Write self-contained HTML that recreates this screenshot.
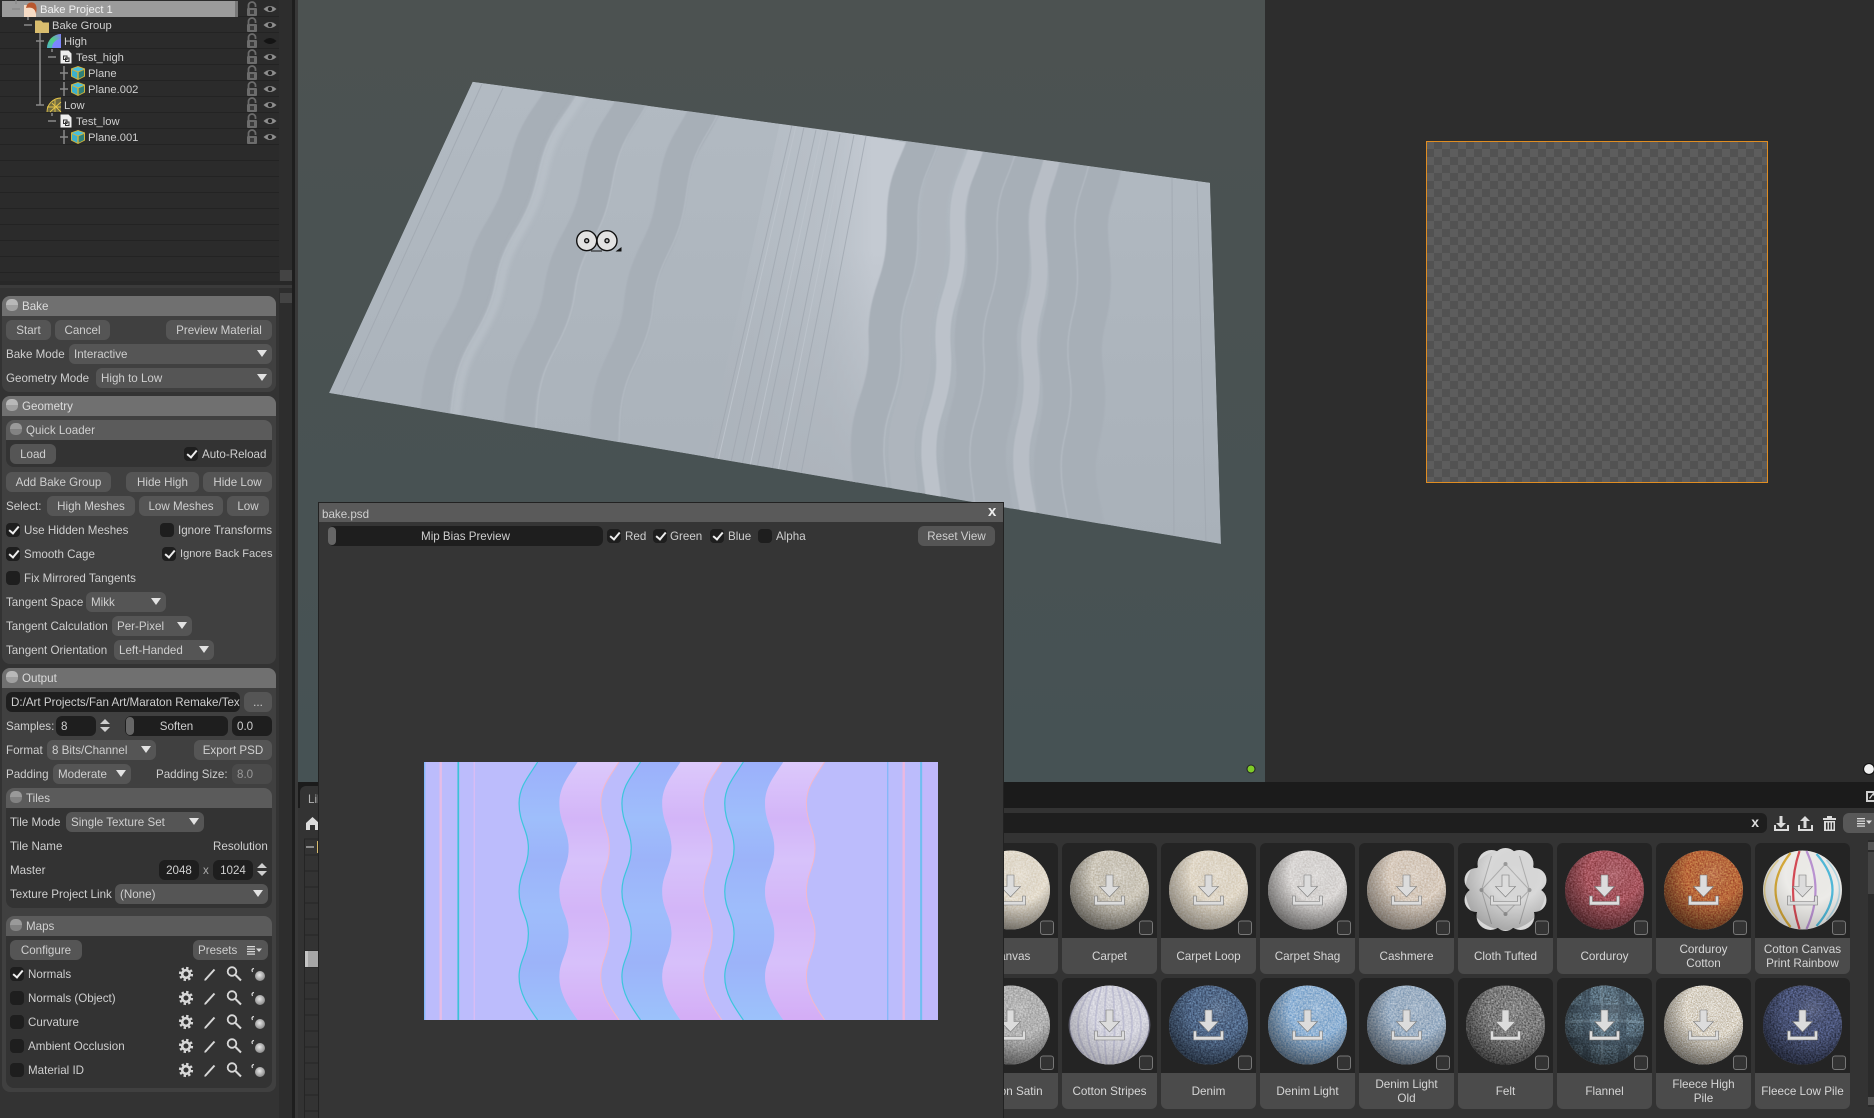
<!DOCTYPE html>
<html lang="en"><head><meta charset="utf-8"><title>Bake</title>
<style>
html,body{margin:0;padding:0;background:#333}
#p{position:relative;width:1874px;height:1118px;overflow:hidden;background:#333;font:11.6px/21px "Liberation Sans",sans-serif;color:#cfcfcf}
#p div{position:absolute;white-space:nowrap;box-sizing:border-box}
#p svg{position:absolute;overflow:hidden}
.t{height:20px}
.b,.d,.i{height:20px;border-radius:6px;background:#555;text-align:center;color:#cfcfcf}
.d{text-align:left;padding-left:5px}
.d:after{content:"";position:absolute;right:5px;top:6px;border-top:7px solid #e2e2e2;border-left:5px solid transparent;border-right:5px solid transparent}
.i{background:#1e1e1e;text-align:left;padding-left:5px}
.c{width:14px;height:14px;border-radius:4px;background:#1e1e1e}
.k:after{content:"";position:absolute;left:2.5px;top:2.5px;width:8px;height:4px;border-left:2px solid #eee;border-bottom:2px solid #eee;transform:rotate(-50deg)}
.h{background:#707070;height:20px;border-radius:8px 8px 0 0;color:#dcdcdc;padding-left:20px;line-height:22px}
.s{background:#5b5b5b;height:20px;border-radius:8px 8px 0 0;padding-left:20px;color:#d0d0d0;line-height:22px}
.n{left:6px;top:3px;width:12px;height:12px;border-radius:5px;background:linear-gradient(#b8b8b8 50%,#a0a0a0 50%)}
.s .n{background:linear-gradient(#9a9a9a 50%,#828282 50%);left:4px}
.m{background:#404040;border-radius:8px}
.q{background:#333;border-radius:8px}
.r{height:16px;line-height:18px;color:#cfcfcf;font-size:11.2px}
.a{width:95px;height:95px;background:#242424;border-radius:6px 6px 0 0}
.l{width:95px;height:36px;background:#4b4b4b;border-radius:0 0 6px 6px;text-align:center;line-height:14px;color:#d6d6d6;display:flex;align-items:center;justify-content:center;white-space:normal!important;padding:2px 3px 0;font-size:11.7px}
</style></head><body><div id="p">

<!-- viewport -->
<div style="left:298px;top:0;width:967px;height:782px;background:linear-gradient(#4c5251,#465254)"></div>
<svg style="left:0;top:0" width="1874" height="782" viewBox="0 0 1874 782">
<defs>
<clipPath id="quad"><path d="M472.6 81.7L1210 182.7 1221 544 329 393Z"/></clipPath>
<linearGradient id="pl" x1="0" y1="0" x2="0" y2="1"><stop offset="0" stop-color="#b2bac2"/><stop offset="1" stop-color="#a9b1b9"/></linearGradient>
<linearGradient id="lt" x1="0" y1="0" x2="1" y2="0"><stop offset="0" stop-color="#c4cad2" stop-opacity="0"/><stop offset=".6" stop-color="#c4cad2" stop-opacity=".45"/><stop offset=".8" stop-color="#c4cad2"/><stop offset="1" stop-color="#c4cad2"/></linearGradient>
<linearGradient id="fd" x1="0" y1="0" x2="0" y2="1"><stop offset=".35" stop-color="#acb3bb" stop-opacity="0"/><stop offset="1" stop-color="#acb3bb" stop-opacity=".9"/></linearGradient>
<filter id="bs" x="-5%" y="-5%" width="110%" height="110%"><feGaussianBlur stdDeviation=".5"/></filter>
<filter id="bh" x="-20%" y="-5%" width="140%" height="110%"><feGaussianBlur stdDeviation="2"/></filter>
<path id="wv" d="M60-80L0 0C-40 60-100 90-100 150C-100 220-40 260-40 335C-40 410-100 430-100 500C-100 570-40 590-40 665C-40 740-100 770-100 830C-100 900-40 950 0 1000L60 1080" fill="none" vector-effect="non-scaling-stroke"/>
</defs>
<g clip-path="url(#quad)">
<path d="M472.6 81.7L1210 182.7 1221 544 329 393Z" fill="url(#pl)"/>
<path d="M780 122L915 144 856 486 706 458Z" fill="url(#lt)"/>
<path d="M780 122L915 144 856 486 706 458Z" fill="url(#fd)"/>
<g fill="none" filter="url(#bs)">
<g stroke="#a7afb7">
<g transform="matrix(.1 0 -.125 .316 560 94.7)"><use href="#wv" stroke-width="30"/></g>
<g transform="matrix(.1 0 -.112 .321 631 103.7)"><use href="#wv" stroke-width="30"/></g>
<g transform="matrix(.1 0 -.098 .325 703 113.7)"><use href="#wv" stroke-width="30"/></g>
<g transform="matrix(.1 0 -.053 .34 922.5 144)"><use href="#wv" stroke-width="32"/></g>
<g transform="matrix(.1 0 -.033 .342 1012.8 157.7)"><use href="#wv" stroke-width="62"/></g>
<g transform="matrix(.1 0 -.0177 .353 1089.7 168.3)"><use href="#wv" stroke-width="62"/></g>
</g>
<g transform="matrix(.1 0 -.047 .339 951.8 149.3)" stroke="#aeb5bd"><use href="#wv" stroke-width="26"/></g>
<g stroke="#bcc2ca">
<g transform="matrix(.1 0 -.042 .339 974.7 152.7)"><use href="#wv" stroke-width="15"/></g>
<g transform="matrix(.1 0 -.0235 .3456 1051 162.7)" stroke="#b8bec6"><use href="#wv" stroke-width="16"/></g>
</g>
<g stroke="#bec5cd" stroke-width="1" opacity=".7">
<g transform="matrix(.1 0 -.125 .316 576 97)"><use href="#wv" stroke-width="1"/></g>
<g transform="matrix(.1 0 -.098 .325 717 116)"><use href="#wv" stroke-width="1"/></g>
<g transform="matrix(.1 0 -.11 .32 646 106)"><use href="#wv" stroke-width="1"/></g>
<g transform="matrix(.1 0 -.04 .34 1014 158)"><use href="#wv" stroke-width="1"/></g>
<g transform="matrix(.1 0 -.02 .35 1088 168)"><use href="#wv" stroke-width="1"/></g>
<g transform="matrix(.1 0 -.05 .34 937 147)"><use href="#wv" stroke-width="1"/></g>
</g>
</g>
<g fill="none" filter="url(#bh)" stroke="#c0c7cf" opacity=".5">
<g transform="matrix(.1 0 -.124 .316 580 98)"><use href="#wv" stroke-width="9"/></g>
</g>
<g fill="none" stroke="#a0a8b0" stroke-width="1">
<path d="M792 125L714 460M804 127L731 462M816 130L742 465M828 132L757 468M840 134L772 470M854 135L786 472M866 136L801 474" opacity=".8"/>
<path d="M503 88L356 400M482 84L340 398M1172 178L1174 537M1197 182L1206 542" opacity=".8"/>
<path d="M796 126L718 461M822 131L750 466M846 134L778 471" stroke="#bcc3cb"/>
</g>
</g>
<!-- eyes cursor -->
<g fill="#e2e2e2" stroke="#111" stroke-width="1.4">
<circle cx="586.7" cy="240.7" r="10"/><circle cx="607" cy="240.7" r="10"/>
<circle cx="586.7" cy="240.7" r="2" fill="#bbb"/><circle cx="607" cy="240.7" r="2" fill="#bbb"/>
</g>
<path d="M591 251H602M617 251H621V248Z" stroke="#111" stroke-width="1" fill="#111"/>
<circle cx="1251" cy="769" r="4" fill="#7ecb28" stroke="#222" stroke-width="1"/>
</svg>

<!-- right 2D panel -->
<div style="left:1265px;top:0;width:609px;height:782px;background:#2d2d2d"></div>
<div style="left:1426px;top:141px;width:342px;height:342px;border:1px solid #e08d22;background-color:#5d5d5d;background-image:linear-gradient(45deg,#525252 25%,transparent 25%,transparent 75%,#525252 75%),linear-gradient(45deg,#525252 25%,transparent 25%,transparent 75%,#525252 75%);background-size:16px 16px;background-position:7px 7px,15px 15px"></div>
<div style="left:1864px;top:764px;width:10px;height:10px;border-radius:5px;background:#f0f0f0;outline:1px solid #111"></div>

<!-- library bars -->
<div style="left:298px;top:782px;width:1576px;height:26px;background:#1b1b1b"></div>
<div style="left:300px;top:786px;width:30px;height:24px;background:#333;border-radius:6px 0 0 0;padding:3px 0 0 8px;color:#b5b5b5">Lil</div>
<div style="left:298px;top:808px;width:1576px;height:310px;background:#333"></div>
<div style="left:1000px;top:813px;width:767px;height:20px;background:#1e1e1e;border-radius:0 6px 6px 0;text-align:right;padding-right:8px;color:#ddd;line-height:19px;font-size:14px;font-weight:bold">x</div>
<div style="left:1843px;top:813px;width:31px;height:20px;background:#585858;border-radius:6px 0 0 6px"></div>
<svg style="left:298px;top:782px" width="1576" height="336" viewBox="298 782 1576 336">
<g fill="#dcdcdc">
<path d="M312.5 817L319 823V830H315V825H310V830H306V823Z"/>
<path d="M306 846H314V848H306Z" fill="#8a8a8a"/>
<path d="M1779.5 816h3v7h3.5l-5 5-5-5h3.5zM1774 825h2v4h11v-4h2v6h-15zM1805 816l5 5h-3.5v7h-3v-7H1800zM1798 825h2v4h11v-4h2v6h-15z"/>
<path d="M1823 818h13v2h-13zM1827 816h5v2h-5zM1824 821h11v10h-11zM1826 822.500v7h1.500v-7zM1829 822.500v7h1.500v-7zM1832 822.500v7h1.500v-7z" fill-rule="evenodd"/>
<path d="M1857 818h8v1.300h-8zM1857 820.500h8v1.300h-8zM1857 823h8v1.300h-8zM1857 825.500h8v1.300h-8zM1866 820.500h6l-3 3.500z"/>
<path d="M1866 791h8v2h-6v7h6v2h-8zM1869 798l4-5-2-1h3v4l-1-1-3 4z" fill="#cfcfcf"/>
</g>
<path d="M304 839H318M304 855H318M304 871H318M304 887H318M304 903H318M304 919H318M304 935H318M304 951H318M304 967H318M304 983H318M304 999H318M304 1015H318M304 1031H318M304 1047H318M304 1063H318M304 1079H318M304 1095H318M304 1111H318M304.500 839V1118" stroke="#252525"/>
<rect x="305" y="951" width="13" height="16" fill="#a6a6a6"/><rect x="305" y="951" width="3" height="16" fill="#c4c4c4"/>
<rect x="317" y="841" width="1" height="12" fill="#d8bb6c"/>
<rect x="1868" y="840" width="6" height="267" fill="#2b2b2b"/><rect x="1868" y="852" width="6" height="42" fill="#444"/><rect x="1868" y="842" width="6" height="8" fill="#555"/><rect x="1868" y="1097" width="6" height="8" fill="#555"/>
</svg>

<!-- cards row 1 -->
<div class="a" style="left:963px;top:843px"></div><div class="l" style="left:963px;top:938px">Canvas</div>
<div class="a" style="left:1062px;top:843px"></div><div class="l" style="left:1062px;top:938px">Carpet</div>
<div class="a" style="left:1161px;top:843px"></div><div class="l" style="left:1161px;top:938px">Carpet Loop</div>
<div class="a" style="left:1260px;top:843px"></div><div class="l" style="left:1260px;top:938px">Carpet Shag</div>
<div class="a" style="left:1359px;top:843px"></div><div class="l" style="left:1359px;top:938px">Cashmere</div>
<div class="a" style="left:1458px;top:843px"></div><div class="l" style="left:1458px;top:938px">Cloth Tufted</div>
<div class="a" style="left:1557px;top:843px"></div><div class="l" style="left:1557px;top:938px">Corduroy</div>
<div class="a" style="left:1656px;top:843px"></div><div class="l" style="left:1656px;top:938px">Corduroy<br>Cotton</div>
<div class="a" style="left:1755px;top:843px"></div><div class="l" style="left:1755px;top:938px">Cotton Canvas<br>Print Rainbow</div>
<!-- cards row 2 -->
<div class="a" style="left:963px;top:978px"></div><div class="l" style="left:963px;top:1073px">Cotton Satin</div>
<div class="a" style="left:1062px;top:978px"></div><div class="l" style="left:1062px;top:1073px">Cotton Stripes</div>
<div class="a" style="left:1161px;top:978px"></div><div class="l" style="left:1161px;top:1073px">Denim</div>
<div class="a" style="left:1260px;top:978px"></div><div class="l" style="left:1260px;top:1073px">Denim Light</div>
<div class="a" style="left:1359px;top:978px"></div><div class="l" style="left:1359px;top:1073px">Denim Light<br>Old</div>
<div class="a" style="left:1458px;top:978px"></div><div class="l" style="left:1458px;top:1073px">Felt</div>
<div class="a" style="left:1557px;top:978px"></div><div class="l" style="left:1557px;top:1073px">Flannel</div>
<div class="a" style="left:1656px;top:978px"></div><div class="l" style="left:1656px;top:1073px">Fleece High<br>Pile</div>
<div class="a" style="left:1755px;top:978px"></div><div class="l" style="left:1755px;top:1073px">Fleece Low Pile</div>

<svg style="left:960px;top:840px" width="914" height="278" viewBox="960 840 914 278">
<defs>
<radialGradient id="sh" cx=".62" cy=".3" r=".85"><stop offset="0" stop-color="#fff" stop-opacity=".12"/><stop offset=".4" stop-color="#000" stop-opacity="0"/><stop offset="1" stop-color="#000" stop-opacity=".68"/></radialGradient>
<filter id="nz" x="0" y="0" width="100%" height="100%" color-interpolation-filters="sRGB"><feTurbulence type="fractalNoise" baseFrequency=".6" numOctaves="2" seed="3"/><feColorMatrix values=".7 0 0 0 .15 .7 0 0 0 .15 .7 0 0 0 .15 0 0 0 0 1"/><feComposite in2="SourceGraphic" operator="in"/><feBlend in2="SourceGraphic" mode="overlay"/></filter>
<filter id="nz2" x="0" y="0" width="100%" height="100%" color-interpolation-filters="sRGB"><feTurbulence type="fractalNoise" baseFrequency=".8" numOctaves="2" seed="7"/><feColorMatrix values="1.7 0 0 0 -.35 1.7 0 0 0 -.35 1.7 0 0 0 -.35 0 0 0 0 1"/><feComposite in2="SourceGraphic" operator="in"/><feBlend in2="SourceGraphic" mode="overlay"/></filter>
<g id="sp"><circle r="39.500" fill="url(#sh)"/></g>
<g id="dl"><path d="M-3.500-15H3.500V-3.500H10L0 7-10-3.500H-3.500Z" fill="#dcdcdc" stroke="#777" stroke-width=".6"/><path d="M-15 6h3v5.500h24V6h3v9h-30Z" fill="#dcdcdc" stroke="#777" stroke-width=".6"/></g>
<rect id="cb" x="30" y="31" width="13" height="13.500" rx="2.500" fill="#333" stroke="#777"/>
<clipPath id="c1"><circle r="39.500"/></clipPath>
</defs>
<g filter="url(#nz)">
<circle cx="1010.500" cy="890" r="39.500" fill="#e6decf"/><circle cx="1109.500" cy="890" r="39.500" fill="#cfc9bc"/><circle cx="1208.500" cy="890" r="39.500" fill="#e2d9c9"/><circle cx="1307.500" cy="890" r="39.500" fill="#dbd8d6"/><circle cx="1406.500" cy="890" r="39.500" fill="#dacdbf"/>
<circle cx="1604.500" cy="890" r="39.500" fill="#a8565f"/><circle cx="1703.500" cy="890" r="39.500" fill="#bb6a3c"/>
<circle cx="1010.500" cy="1025" r="39.500" fill="#b5b5b5"/><circle cx="1109.500" cy="1025" r="39.500" fill="#d6d6e0"/><circle cx="1208.500" cy="1025" r="39.500" fill="#51698a"/><circle cx="1307.500" cy="1025" r="39.500" fill="#94b6d8"/><circle cx="1406.500" cy="1025" r="39.500" fill="#9fb3c8"/><circle cx="1505.500" cy="1025" r="39.500" fill="#7d7d7d"/><circle cx="1604.500" cy="1025" r="39.500" fill="#596f7e"/><circle cx="1802.500" cy="1025" r="39.500" fill="#4a5478"/>
</g>
<g filter="url(#nz2)"><circle cx="1703.500" cy="1025" r="39.500" fill="#dcd5c8"/></g>
<!-- tufted -->
<g transform="translate(1505.500 890)" fill="#d8d8d8"><circle r="36"/><circle cx="-14" cy="-26" r="14"/><circle cx="14" cy="-26" r="14"/><circle cx="0" cy="-29" r="13"/><circle cx="-29" cy="-10" r="12"/><circle cx="29" cy="-10" r="12"/><circle cx="-29" cy="10" r="12"/><circle cx="29" cy="10" r="12"/><circle cx="-15" cy="26" r="14"/><circle cx="15" cy="26" r="14"/><circle cx="0" cy="30" r="11"/>
<path d="M0-26L-24 0 0 24 24 0ZM-14-34L-24 0-14 34M14-34L24 0 14 34" fill="none" stroke="#8a8a8a" stroke-width="1" opacity=".55"/>
<circle cx="0" cy="-26" r="2" fill="#999"/><circle cx="-24" cy="0" r="2" fill="#999"/><circle cx="24" cy="0" r="2" fill="#999"/><circle cx="0" cy="24" r="2" fill="#999"/>
<circle r="40" fill="url(#sh)" opacity=".45"/></g>
<!-- rainbow -->
<g transform="translate(1802.500 890)"><circle r="39.500" fill="#ecebe8"/><g fill="none" stroke-width="2.200"><path d="M-12-37Q-42 0-12 37" stroke="#d8ab3a"/><path d="M-3-39Q-16 0-3 39" stroke="#d44a55"/><path d="M4-39Q22 0 4 39" stroke="#b890d0"/><path d="M14-36Q46 0 14 36" stroke="#50b8d8"/><path d="M-24-30Q-52 0-24 30" stroke="#e8c860" stroke-width="1.500" opacity=".6"/><path d="M24-30Q50 0 24 30" stroke="#88c8e0" stroke-width="1.500" opacity=".6"/></g></g>
<!-- cotton stripes -->
<g transform="translate(1109.500 1025)" fill="none" stroke="#a2a2c4" stroke-width="1.800" opacity=".42"><path d="M-3-39Q-7 0-3 39M3-39Q7 0 3 39M-8-38Q-20 0-8 38M8-38Q20 0 8 38M-13-37Q-32 0-13 37M13-37Q32 0 13 37M-19-34Q-44 0-19 34M19-34Q44 0 19 34M-26-29Q-54 0-26 29M26-29Q54 0 26 29"/></g>
<!-- flannel -->
<g transform="translate(1604.500 1025)" clip-path="url(#c1)"><path d="M-40-20H40V-12H-40ZM-40 12H40V20H-40ZM-22-40H-14V40H-22ZM14-40H22V40H14Z" fill="#2f3c48" opacity=".4"/><path d="M-40-4Q0-8 40-4V-1Q0-5-40-1ZM-4-40V40H-1V-40Z" fill="#b8d0e0" opacity=".2"/></g>
<g>
<use href="#sp" x="1010.500" y="890"/><use href="#sp" x="1109.500" y="890"/><use href="#sp" x="1208.500" y="890" opacity=".75"/><use href="#sp" x="1307.500" y="890"/><use href="#sp" x="1406.500" y="890" opacity=".85"/><use href="#sp" x="1604.500" y="890"/><use href="#sp" x="1703.500" y="890"/><use href="#sp" x="1802.500" y="890" opacity=".35"/>
<use href="#sp" x="1010.500" y="1025"/><use href="#sp" x="1109.500" y="1025" opacity=".4"/><use href="#sp" x="1208.500" y="1025"/><use href="#sp" x="1307.500" y="1025"/><use href="#sp" x="1406.500" y="1025"/><use href="#sp" x="1505.500" y="1025"/><use href="#sp" x="1604.500" y="1025"/><use href="#sp" x="1703.500" y="1025"/><use href="#sp" x="1802.500" y="1025"/>
</g>
<g>
<use href="#dl" x="1010.500" y="890"/><use href="#dl" x="1109.500" y="890"/><use href="#dl" x="1208.500" y="890"/><use href="#dl" x="1307.500" y="890"/><use href="#dl" x="1406.500" y="890"/><use href="#dl" x="1505.500" y="890"/><use href="#dl" x="1604.500" y="890"/><use href="#dl" x="1703.500" y="890"/><use href="#dl" x="1802.500" y="890"/>
<use href="#dl" x="1010.500" y="1025"/><use href="#dl" x="1109.500" y="1025"/><use href="#dl" x="1208.500" y="1025"/><use href="#dl" x="1307.500" y="1025"/><use href="#dl" x="1406.500" y="1025"/><use href="#dl" x="1505.500" y="1025"/><use href="#dl" x="1604.500" y="1025"/><use href="#dl" x="1703.500" y="1025"/><use href="#dl" x="1802.500" y="1025"/>
<use href="#cb" x="1010.500" y="890"/><use href="#cb" x="1109.500" y="890"/><use href="#cb" x="1208.500" y="890"/><use href="#cb" x="1307.500" y="890"/><use href="#cb" x="1406.500" y="890"/><use href="#cb" x="1505.500" y="890"/><use href="#cb" x="1604.500" y="890"/><use href="#cb" x="1703.500" y="890"/><use href="#cb" x="1802.500" y="890"/>
<use href="#cb" x="1010.500" y="1025"/><use href="#cb" x="1109.500" y="1025"/><use href="#cb" x="1208.500" y="1025"/><use href="#cb" x="1307.500" y="1025"/><use href="#cb" x="1406.500" y="1025"/><use href="#cb" x="1505.500" y="1025"/><use href="#cb" x="1604.500" y="1025"/><use href="#cb" x="1703.500" y="1025"/><use href="#cb" x="1802.500" y="1025"/>
</g>
</svg>

<!-- bake window -->
<div style="left:318px;top:502px;width:686px;height:616px;background:#353535;border:1px solid #222;border-bottom:0"></div>
<div style="left:319px;top:503px;width:684px;height:19px;background:#5a5a5a"></div>
<div class="t" style="left:322px;top:504px;color:#d0d0d0">bake.psd</div>
<div class="t" style="left:988px;top:501px;font-size:15px;font-weight:bold;color:#eee">x</div>
<div class="i" style="left:328px;top:526px;width:275px;text-align:center;padding:0">Mip Bias Preview</div>
<div style="left:328px;top:527px;width:8px;height:18px;border-radius:4px;background:#666"></div>
<div class="c k" style="left:607px;top:529px"></div><div class="t" style="left:625px;top:526px">Red</div>
<div class="c k" style="left:653px;top:529px"></div><div class="t" style="left:670px;top:526px">Green</div>
<div class="c k" style="left:710px;top:529px"></div><div class="t" style="left:728px;top:526px">Blue</div>
<div class="c" style="left:758px;top:529px"></div><div class="t" style="left:776px;top:526px">Alpha</div>
<div class="b" style="left:918px;top:526px;width:77px">Reset View</div>
<svg style="left:424px;top:762px" width="514" height="258" viewBox="12 36 1492 774" preserveAspectRatio="none">
<defs>
<linearGradient id="bl" x1="0" y1="0" x2="0" y2="1"><stop offset="0" stop-color="#9cb0fb"/><stop offset=".22" stop-color="#9ebefb"/><stop offset=".38" stop-color="#9cb3f9"/><stop offset=".58" stop-color="#9ebdfb"/><stop offset=".78" stop-color="#9cb3f9"/><stop offset="1" stop-color="#9cc2fb"/></linearGradient>
<linearGradient id="pk" x1="0" y1="0" x2="0" y2="1"><stop offset="0" stop-color="#dcc9fb"/><stop offset=".22" stop-color="#d3b5f8"/><stop offset=".38" stop-color="#d7c2fa"/><stop offset=".58" stop-color="#d3b5f8"/><stop offset=".78" stop-color="#d7c0fa"/><stop offset="1" stop-color="#d4adf6"/></linearGradient>
<g id="wb">
<path d="M342 36C315 80 288 110 288 160C288 220 315 240 315 295C315 350 288 370 288 425C288 480 315 500 315 550C315 610 288 630 288 680C288 730 315 770 342 810H458C431 770 405 730 405 680C405 630 432 610 432 550C432 500 405 480 405 425C405 370 432 350 432 295C432 240 405 220 405 160C405 110 431 80 458 36Z" fill="url(#bl)"/>
<path d="M458 36C431 80 405 110 405 160C405 220 432 240 432 295C432 350 405 370 405 425C405 480 432 500 432 550C432 610 405 630 405 680C405 730 431 770 458 810H578C551 770 525 730 525 680C525 630 550 610 550 550C550 500 525 480 525 425C525 370 550 350 550 295C550 240 525 220 525 160C525 110 551 80 578 36Z" fill="url(#pk)"/>
<path d="M342 36C315 80 288 110 288 160C288 220 315 240 315 295C315 350 288 370 288 425C288 480 315 500 315 550C315 610 288 630 288 680C288 730 315 770 342 810" fill="none" stroke="#3cc6dc" stroke-width="3.500"/>
<path d="M578 36C551 80 525 110 525 160C525 220 550 240 550 295C550 350 525 370 525 425C525 480 550 500 550 550C550 610 525 630 525 680C525 730 551 770 578 810" fill="none" stroke="#f2b8cc" stroke-width="3"/>
</g>
</defs>
<rect x="12" y="36" width="1492" height="774" fill="#bcbcfc"/>
<rect x="1458" y="36" width="46" height="774" fill="#c0b8fc"/>
<use href="#wb"/><use href="#wb" x="298.500"/><use href="#wb" x="597"/>
<rect x="12" y="36" width="4" height="774" fill="#82b8fa"/>
<rect x="57" y="36" width="7" height="774" fill="#e6bde6"/>
<rect x="109" y="36" width="5" height="774" fill="#3ec2d8"/>
<rect x="156" y="36" width="4" height="774" fill="#d8bcf4"/>
<rect x="1356" y="36" width="4" height="774" fill="#86b8f8"/>
<rect x="1401" y="36" width="7" height="774" fill="#eab8e0"/>
<rect x="1452" y="36" width="6" height="774" fill="#70bef0"/>
</svg>

<!-- left column -->
<div style="left:0;top:0;width:298px;height:1118px;background:#333"></div>
<div style="left:279px;top:0;width:13px;height:1118px;background:#2d2d2d"></div>
<div style="left:292px;top:0;width:3px;height:1118px;background:#1e1e1e"></div>
<div style="left:295px;top:0;width:3px;height:1118px;background:#383838"></div>
<div style="left:0;top:0;width:279px;height:281px;background:#2b2b2b repeating-linear-gradient(#2b2b2b 0 15px,#232323 15px 16px) 0 1px"></div>
<div style="left:0;top:281px;width:292px;height:4px;background:#282828"></div>
<div style="left:0;top:285px;width:292px;height:3px;background:#3a3a3a"></div>
<div style="left:280px;top:270px;width:12px;height:11px;background:#444"></div>
<div style="left:280px;top:293px;width:12px;height:10px;background:#444"></div>
<div style="left:2px;top:1px;width:236px;height:16px;background:#9b9b9b"></div>
<div style="left:235px;top:1px;width:3px;height:16px;background:#777"></div>
<div class="r" style="left:40px;top:1px;color:#f0f0f0">Bake Project 1</div>
<div class="r" style="left:52px;top:17px">Bake Group</div>
<div class="r" style="left:64px;top:33px">High</div>
<div class="r" style="left:76px;top:49px">Test_high</div>
<div class="r" style="left:88px;top:65px">Plane</div>
<div class="r" style="left:88px;top:81px">Plane.002</div>
<div class="r" style="left:64px;top:97px">Low</div>
<div class="r" style="left:76px;top:113px">Test_low</div>
<div class="r" style="left:88px;top:129px">Plane.001</div>
<svg style="left:0;top:0" width="292" height="150" viewBox="0 0 292 150">
<defs>
<g id="lk"><path d="M-3.500-1V-3.500A3.500 3.500 0 0 1 3.500-3.500V-2" fill="none" stroke="#6c6c6c" stroke-width="1.800"/><rect x="-5" y="-1" width="10" height="8" rx="1" fill="#6c6c6c"/><rect x="-2" y="1" width="4" height="4" fill="#3a3a3a"/></g>
<g id="ey"><path d="M-6.500 0Q0-6 6.500 0Q0 6-6.500 0Z" fill="#8e8e8e"/><circle r="2.200" fill="#222"/></g>
<g id="cu"><path d="M0-7L7-4.500V3.500L0 7-7 3.500V-4.500Z" fill="#d2b33a"/><path d="M0-6L6-4 0-1.500-6-4Z" fill="#45bfe0"/><path d="M-6-3L-.700-.800V5.800L-6 3Z" fill="#3bb0cc"/><path d="M6-3L.700-.800V5.800L6 3Z" fill="#2f7f78"/></g>
<g id="dc"><path d="M-5.500-6.500H2.500L5.500-3.500V6.500H-5.500Z" fill="#eee"/><path d="M-2.500-1H1V2.500H-2.500ZM-.500 1H3V4.500H-.500Z" fill="none" stroke="#333"/></g>
<linearGradient id="hg" x1="0" y1="1" x2="1" y2="0"><stop offset="0" stop-color="#4fb0c8"/><stop offset=".5" stop-color="#50d080"/><stop offset="1" stop-color="#8878ff"/></linearGradient>
</defs>
<g stroke="#8a8a8a" stroke-width="1.500">
<path d="M12 9H20M16 0V4M24 25H32M28 17V20M36 41H44M40 33V105M36 105H44M48 57H56M52 49V52M48 121H56M52 113V116M60 73H68M64 66V80M60 89H68M64 82V96M60 137H68M64 130V144"/>
</g>
<path d="M24 5H36V17H24Z" fill="#f6dcc6"/><path d="M26 8Q27 2 32 2.500Q37 3 36.500 10L36 14Q35 6 26 8Z" fill="#b8572e"/>
<path d="M35 20.500H41L43 22.500H49V33H35Z" fill="#d9bd6e"/>
<path d="M47 48A14 14 0 0 1 61 34V48Z" fill="url(#hg)"/><path d="M52 48A9 9 0 0 1 61 39V48Z" fill="#7d85ff"/>
<path d="M47 112A14 14 0 0 1 61 98V112Z" fill="#6f6a40"/><path d="M47 112A14 14 0 0 1 61 98M50 112L61 102M52 103L61 112M55 100V112M47 107H61" fill="none" stroke="#e8c74a" stroke-width=".9"/>
<use href="#dc" x="66" y="57"/><use href="#dc" x="66" y="121"/>
<use href="#cu" x="78" y="73"/><use href="#cu" x="78" y="89"/><use href="#cu" x="78" y="137"/>
<use href="#lk" x="252" y="9"/><use href="#lk" x="252" y="25"/><use href="#lk" x="252" y="41"/><use href="#lk" x="252" y="57"/><use href="#lk" x="252" y="73"/><use href="#lk" x="252" y="89"/><use href="#lk" x="252" y="105"/><use href="#lk" x="252" y="121"/><use href="#lk" x="252" y="137"/>
<use href="#ey" x="270" y="9"/><use href="#ey" x="270" y="25"/><path d="M263.500 41Q270 35 276.500 41Q270 47 263.500 41Z" fill="#141414"/><use href="#ey" x="270" y="57"/><use href="#ey" x="270" y="73"/><use href="#ey" x="270" y="89"/><use href="#ey" x="270" y="105"/><use href="#ey" x="270" y="121"/><use href="#ey" x="270" y="137"/>
</svg>

<!-- Bake panel -->
<div class="m" style="left:2px;top:296px;width:274px;height:96px"></div>
<div class="h" style="left:2px;top:296px;width:274px">Bake<div class="n" style="left:4px;top:3px"></div></div>
<div class="b" style="left:6px;top:320px;width:45px">Start</div>
<div class="b" style="left:55px;top:320px;width:55px">Cancel</div>
<div class="b" style="left:166px;top:320px;width:106px">Preview Material</div>
<div class="t" style="left:6px;top:344px">Bake Mode</div>
<div class="d" style="left:69px;top:344px;width:203px">Interactive</div>
<div class="t" style="left:6px;top:368px">Geometry Mode</div>
<div class="d" style="left:96px;top:368px;width:176px">High to Low</div>

<!-- Geometry panel -->
<div class="m" style="left:2px;top:396px;width:274px;height:268px"></div>
<div class="h" style="left:2px;top:396px;width:274px">Geometry<div class="n" style="left:4px;top:3px"></div></div>
<div class="q" style="left:6px;top:420px;width:266px;height:47px"></div>
<div class="s" style="left:6px;top:420px;width:266px">Quick Loader<div class="n" style="left:4px;top:3px"></div></div>
<div class="b" style="left:10px;top:444px;width:46px">Load</div>
<div class="c k" style="left:184px;top:447px"></div><div class="t" style="left:202px;top:444px">Auto-Reload</div>
<div class="b" style="left:6px;top:472px;width:105px">Add Bake Group</div>
<div class="b" style="left:126px;top:472px;width:73px">Hide High</div>
<div class="b" style="left:203px;top:472px;width:69px">Hide Low</div>
<div class="t" style="left:6px;top:496px">Select:</div>
<div class="b" style="left:47px;top:496px;width:88px">High Meshes</div>
<div class="b" style="left:139px;top:496px;width:84px">Low Meshes</div>
<div class="b" style="left:227px;top:496px;width:42px">Low</div>
<div class="c k" style="left:6px;top:523px"></div><div class="t" style="left:24px;top:520px">Use Hidden Meshes</div>
<div class="c" style="left:160px;top:523px"></div><div class="t" style="left:178px;top:520px">Ignore Transforms</div>
<div class="c k" style="left:6px;top:547px"></div><div class="t" style="left:24px;top:544px">Smooth Cage</div>
<div class="c k" style="left:162px;top:547px"></div><div class="t" style="left:180px;top:544px;font-size:11.1px">Ignore Back Faces</div>
<div class="c" style="left:6px;top:571px"></div><div class="t" style="left:24px;top:568px">Fix Mirrored Tangents</div>
<div class="t" style="left:6px;top:592px">Tangent Space</div>
<div class="d" style="left:86px;top:592px;width:80px">Mikk</div>
<div class="t" style="left:6px;top:616px">Tangent Calculation</div>
<div class="d" style="left:112px;top:616px;width:80px">Per-Pixel</div>
<div class="t" style="left:6px;top:640px">Tangent Orientation</div>
<div class="d" style="left:114px;top:640px;width:100px">Left-Handed</div>

<!-- Output panel -->
<div class="m" style="left:2px;top:668px;width:274px;height:424px"></div>
<div class="h" style="left:2px;top:668px;width:274px">Output<div class="n" style="left:4px;top:3px"></div></div>
<div class="i" style="left:6px;top:692px;width:234px;overflow:hidden">D:/Art Projects/Fan Art/Maraton Remake/Textures</div>
<div class="b" style="left:244px;top:692px;width:28px">...</div>
<div class="t" style="left:6px;top:716px">Samples:</div>
<div class="i" style="left:56px;top:716px;width:40px">8</div>
<div class="i" style="left:125px;top:716px;width:103px;text-align:center;padding:0">Soften</div>
<div style="left:126px;top:717px;width:8px;height:18px;border-radius:4px;background:#666"></div>
<div class="i" style="left:232px;top:716px;width:40px">0.0</div>
<div class="t" style="left:6px;top:740px">Format</div>
<div class="d" style="left:47px;top:740px;width:109px">8 Bits/Channel</div>
<div class="b" style="left:194px;top:740px;width:78px">Export PSD</div>
<div class="t" style="left:6px;top:764px">Padding</div>
<div class="d" style="left:53px;top:764px;width:78px">Moderate</div>
<div class="t" style="left:156px;top:764px">Padding Size:</div>
<div class="i" style="left:232px;top:764px;width:40px;background:#4a4a4a;color:#999">8.0</div>
<div class="q" style="left:6px;top:788px;width:266px;height:120px"></div>
<div class="s" style="left:6px;top:788px;width:266px">Tiles<div class="n" style="left:4px;top:3px"></div></div>
<div class="t" style="left:10px;top:812px">Tile Mode</div>
<div class="d" style="left:66px;top:812px;width:138px">Single Texture Set</div>
<div class="t" style="left:10px;top:836px">Tile Name</div>
<div class="t" style="left:213px;top:836px">Resolution</div>
<div class="t" style="left:10px;top:860px">Master</div>
<div class="i" style="left:159px;top:860px;width:40px;text-align:center;padding:0">2048</div>
<div class="t" style="left:203px;top:860px;color:#aaa">x</div>
<div class="i" style="left:213px;top:860px;width:40px;text-align:center;padding:0">1024</div>
<div class="t" style="left:10px;top:884px">Texture Project Link</div>
<div class="d" style="left:115px;top:884px;width:153px">(None)</div>
<div class="q" style="left:6px;top:916px;width:266px;height:172px"></div>
<div class="s" style="left:6px;top:916px;width:266px">Maps<div class="n" style="left:4px;top:3px"></div></div>
<div class="b" style="left:10px;top:940px;width:72px">Configure</div>
<div class="b" style="left:193px;top:940px;width:75px;text-align:left;padding-left:5px">Presets</div>
<div class="c k" style="left:10px;top:967px"></div><div class="t" style="left:28px;top:964px">Normals</div>
<div class="c" style="left:10px;top:991px"></div><div class="t" style="left:28px;top:988px">Normals (Object)</div>
<div class="c" style="left:10px;top:1015px"></div><div class="t" style="left:28px;top:1012px">Curvature</div>
<div class="c" style="left:10px;top:1039px"></div><div class="t" style="left:28px;top:1036px">Ambient Occlusion</div>
<div class="c" style="left:10px;top:1063px"></div><div class="t" style="left:28px;top:1060px">Material ID</div>
<svg style="left:0;top:660px" width="292" height="458" viewBox="0 660 292 458">
<defs>
<radialGradient id="bw" cx=".45" cy=".4" r=".6"><stop offset="0" stop-color="#e8e8e8"/><stop offset="1" stop-color="#8a8a8a"/></radialGradient>
<g id="ic">
<g fill="none" stroke="#d8d8d8"><circle cx="186" r="3.800" stroke-width="2.600"/><circle cx="186" r="6" stroke-width="2.200" stroke-dasharray="2.400 2.300"/></g>
<path d="M205 6L214.500-4.500" stroke="#d8d8d8" stroke-width="2"/><path d="M204 6.500L205.500 5 206 6.500Z" fill="#d8d8d8"/>
<g fill="none" stroke="#d8d8d8"><circle cx="232" cy="-2.500" r="4.300" stroke-width="1.800"/><path d="M235.500 1L241 6.500" stroke-width="2"/></g>
<circle cx="260" cy="2" r="5" fill="url(#bw)"/>
<path d="M254-5.500Q251-5 252.500-2" fill="none" stroke="#e0e0e0" stroke-width="1.200"/>
</g>
<path id="su" d="M100 724L105 719 110 724ZM100 727H110L105 732Z" fill="#cfcfcf"/>
</defs>
<use href="#ic" y="974"/><use href="#ic" y="998"/><use href="#ic" y="1022"/><use href="#ic" y="1046"/><use href="#ic" y="1070"/>
<use href="#su"/><use href="#su" x="157" y="144"/>
<path d="M247 946h8v1.300h-8zM247 948.500h8v1.300h-8zM247 951h8v1.300h-8zM247 953.500h8v1.300h-8zM256 948.500h6l-3 3.500z" fill="#d8d8d8"/>
</svg>

</div></body></html>
